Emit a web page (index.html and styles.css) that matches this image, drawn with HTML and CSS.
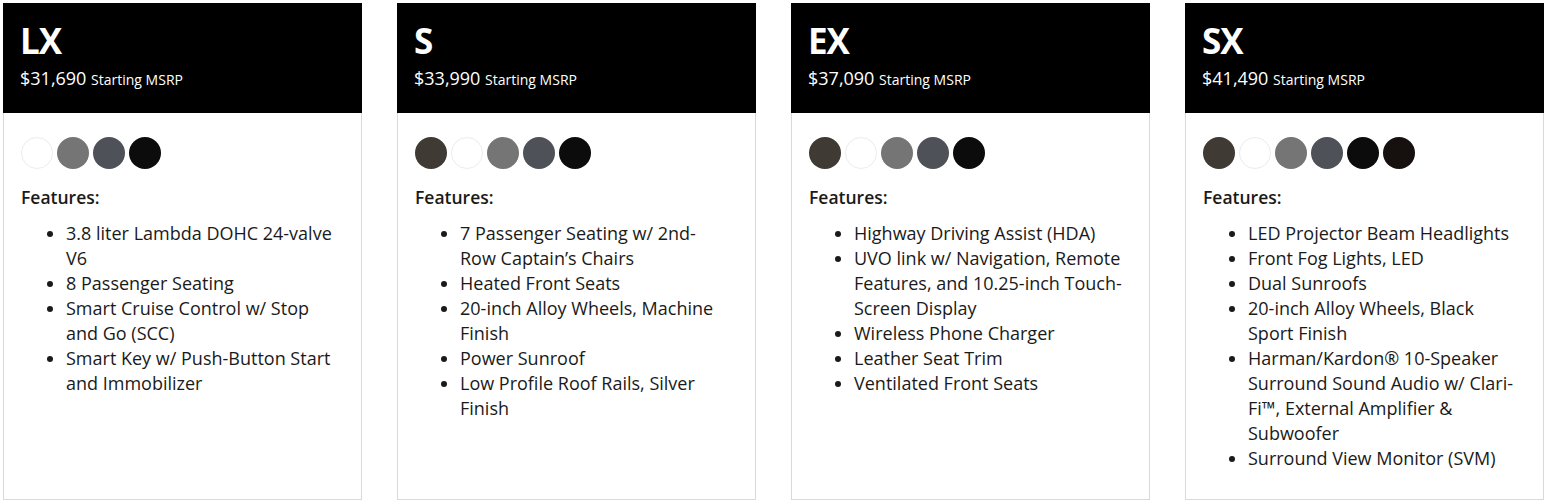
FILE: index.html
```html
<!DOCTYPE html>
<html lang="en">
<head>
<meta charset="utf-8">
<title>Trims</title>
<link rel="stylesheet" href="styles.css">
</head>
<body>
<div class="trims">
  <div class="card">
    <div class="head">
      <h2 class="name">LX</h2>
      <div class="price">$31,690 <span class="msrp">Starting MSRP</span></div>
    </div>
    <div class="body">
      <div class="swatches">
        <span class="sw white"></span><span class="sw gray"></span><span class="sw slate"></span><span class="sw black"></span>
      </div>
      <div class="feat">Features:</div>
      <ul class="list">
        <li>3.8 liter Lambda DOHC 24-valve V6</li>
        <li>8 Passenger Seating</li>
        <li>Smart Cruise Control w/ Stop and Go (SCC)</li>
        <li>Smart Key w/ Push-Button Start and Immobilizer</li>
      </ul>
    </div>
  </div>
  <div class="card">
    <div class="head">
      <h2 class="name">S</h2>
      <div class="price">$33,990 <span class="msrp">Starting MSRP</span></div>
    </div>
    <div class="body">
      <div class="swatches">
        <span class="sw brown"></span><span class="sw white"></span><span class="sw gray"></span><span class="sw slate"></span><span class="sw black"></span>
      </div>
      <div class="feat">Features:</div>
      <ul class="list">
        <li>7 Passenger Seating w/ 2nd-Row Captain’s Chairs</li>
        <li>Heated Front Seats</li>
        <li>20-inch Alloy Wheels, Machine Finish</li>
        <li>Power Sunroof</li>
        <li>Low Profile Roof Rails, Silver Finish</li>
      </ul>
    </div>
  </div>
  <div class="card">
    <div class="head">
      <h2 class="name">EX</h2>
      <div class="price">$37,090 <span class="msrp">Starting MSRP</span></div>
    </div>
    <div class="body">
      <div class="swatches">
        <span class="sw brown"></span><span class="sw white"></span><span class="sw gray"></span><span class="sw slate"></span><span class="sw black"></span>
      </div>
      <div class="feat">Features:</div>
      <ul class="list">
        <li>Highway Driving Assist (HDA)</li>
        <li>UVO link w/ Navigation, Remote Features, and 10.25-inch Touch-Screen Display</li>
        <li>Wireless Phone Charger</li>
        <li>Leather Seat Trim</li>
        <li>Ventilated Front Seats</li>
      </ul>
    </div>
  </div>
  <div class="card">
    <div class="head">
      <h2 class="name">SX</h2>
      <div class="price">$41,490 <span class="msrp">Starting MSRP</span></div>
    </div>
    <div class="body">
      <div class="swatches">
        <span class="sw brown"></span><span class="sw white"></span><span class="sw gray"></span><span class="sw slate"></span><span class="sw black"></span><span class="sw black2"></span>
      </div>
      <div class="feat">Features:</div>
      <ul class="list">
        <li>LED Projector Beam Headlights</li>
        <li>Front Fog Lights, LED</li>
        <li>Dual Sunroofs</li>
        <li>20-inch Alloy Wheels, Black Sport Finish</li>
        <li>Harman/Kardon® 10-Speaker Surround Sound Audio w/ Clari-Fi™, External Amplifier &amp; Subwoofer</li>
        <li>Surround View Monitor (SVM)</li>
      </ul>
    </div>
  </div>
</div>
</body>
</html>
```

FILE: styles.css
```css
* { box-sizing: border-box; }
html, body { margin: 0; padding: 0; background: #fff; }
body {
  font-family: "Open Sans", "Noto Sans", sans-serif;
  color: #1a1a1a;
}
.trims {
  display: grid;
  grid-template-columns: repeat(4, 1fr);
  gap: 35px;
  padding: 3px 4px 4px 3px;
  height: 504px;
}
.card {
  display: flex;
  flex-direction: column;
  border: 1px solid #d9d9d9;
  border-top: none;
  height: 497px;
}
.head {
  background: #000;
  color: #fff;
  height: 110px;
  padding: 18px 17px 0;
  margin: 0 -1px;
}
.name {
  margin: 0;
  font-size: 35px;
  line-height: 40px;
  font-weight: 700;
  letter-spacing: -1px;
}
.price {
  margin-top: 6px;
  font-size: 18px;
  line-height: 22px;
}
.msrp { font-size: 14px; }
.body {
  padding: 24px 17px 0;
}
.swatches {
  display: flex;
  gap: 4px;
  height: 32px;
}
.sw {
  width: 32px;
  height: 32px;
  border-radius: 50%;
  display: block;
}
.white { background: #fff; border: 1px solid #ececec; }
.gray { background: #757575; }
.slate { background: #4e5158; }
.black { background: #0c0c0c; }
.black2 { background: #16100e; }
.brown { background: #3f3a33; }
.feat {
  margin-top: 16px;
  font-size: 17.5px;
  font-weight: 600;
  line-height: 24px;
}
.list {
  margin: 12px 0 0;
  padding-left: 45px;
  padding-right: 10px;
  font-size: 18px;
  line-height: 25px;
}
```
